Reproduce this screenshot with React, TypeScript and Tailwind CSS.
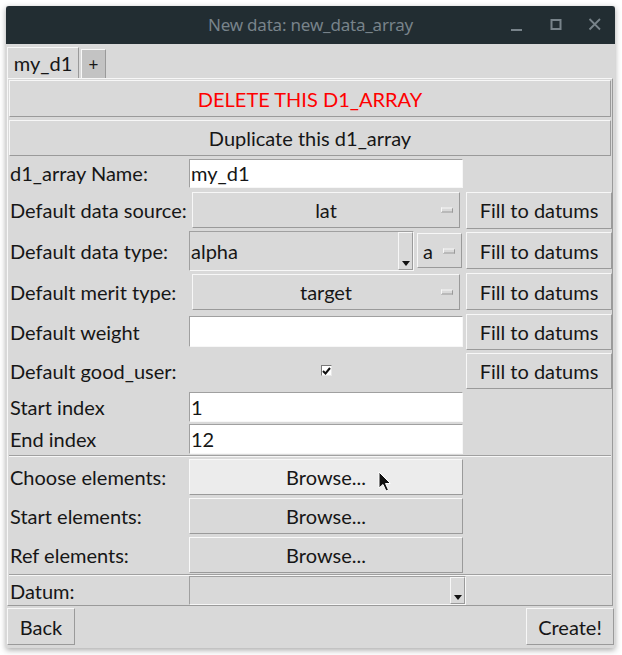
import React from "react";

const font = { fontFamily: "Lato, 'Open Sans', sans-serif" };

const raised =
  "border border-t-[#f7f7f7] border-l-[#f7f7f7] border-b-[#9a9a9a] border-r-[#9a9a9a] bg-[#d9d9d9]";
const sunken =
  "border border-t-[#a0a0a0] border-l-[#a0a0a0] border-b-[#f7f7f7] border-r-[#f7f7f7]";

function Label({ children }: { children: React.ReactNode }) {
  return (
    <div className="flex items-center pl-[1px] text-[20px] leading-none text-[#161616]">
      {children}
    </div>
  );
}

function FillButton() {
  return (
    <button
      type="button"
      className={`${raised} ml-[3px] flex h-full w-[146px] items-center justify-center text-[20px] leading-none text-[#161616]`}
    >
      Fill to datums
    </button>
  );
}

function Indicator() {
  return (
    <span className="absolute right-[6px] top-1/2 h-[5px] w-[12px] -translate-y-1/2 border border-t-[#f7f7f7] border-l-[#f7f7f7] border-b-[#9a9a9a] border-r-[#9a9a9a] bg-[#d9d9d9]" />
  );
}

function MenuButton({ value }: { value: string }) {
  return (
    <div
      className={`${raised} relative mx-[3px] flex h-full items-center justify-center text-[20px] leading-none text-[#161616]`}
    >
      {value}
      <Indicator />
    </div>
  );
}

function Arrow() {
  return (
    <div className="flex h-full w-[15px] items-end justify-center border border-t-[#f7f7f7] border-l-[#f7f7f7] border-b-[#9a9a9a] border-r-[#9a9a9a] pb-[3px]">
      <svg width="8" height="5" viewBox="0 0 8 5">
        <path d="M0 0 H8 L4 5 Z" fill="#111" />
      </svg>
    </div>
  );
}

function Entry({ value }: { value?: string }) {
  return (
    <div
      className={`${sunken} flex h-full items-center bg-white pl-[1px] text-[20px] leading-none text-[#161616]`}
    >
      {value}
    </div>
  );
}

function Row({
  h,
  label,
  mid,
  right,
}: {
  h: string;
  label: string;
  mid?: React.ReactNode;
  right?: React.ReactNode;
}) {
  return (
    <div className={`grid grid-cols-[180px_274px_150px] ${h}`}>
      <Label>{label}</Label>
      <div className="flex flex-col justify-center">{mid}</div>
      <div className="flex flex-col justify-center">{right}</div>
    </div>
  );
}

function Separator() {
  return <div className="h-[2px] border-t border-t-[#a0a0a0] border-b border-b-[#f7f7f7]" />;
}

function Browse({ active }: { active?: boolean }) {
  return (
    <div
      className={`flex h-[36px] items-center justify-center border border-t-[#f9f9f9] border-l-[#f9f9f9] border-b-[#9a9a9a] border-r-[#9a9a9a] text-[20px] leading-none text-[#161616] ${
        active ? "bg-[#ececec]" : "bg-[#d9d9d9]"
      }`}
    >
      Browse...
    </div>
  );
}

export default function App() {
  return (
    <div className="h-[655px] w-[622px] bg-white pl-[6px] pt-[6px]" style={font}>
      <div className="flex h-[642px] w-[609px] flex-col bg-[#d9d9d9] shadow-[0_2px_6px_rgba(0,0,0,0.35)]">
        {/* title bar */}
        <div className="relative flex h-[38px] items-center justify-center rounded-t-[3px] bg-[#222d32]">
          <span
            className="text-[17px] tracking-[-0.2px] text-[#78838a]"
            style={{ fontFamily: "'Noto Sans', sans-serif" }}
          >
            New data: new_data_array
          </span>
          <div className="absolute right-[12px] top-0 flex h-full items-center gap-[23px] text-[#78838a]">
            <svg width="16" height="16" viewBox="0 0 16 16">
              <path d="M2 13 H13" stroke="currentColor" strokeWidth="2" />
            </svg>
            <svg width="16" height="16" viewBox="0 0 16 16">
              <rect x="3.5" y="3" width="9" height="9" stroke="currentColor" strokeWidth="2" fill="none" />
            </svg>
            <svg width="16" height="16" viewBox="0 0 16 16">
              <path d="M2.5 2 L13 12.5 M13 2 L2.5 12.5" stroke="currentColor" strokeWidth="1.8" />
            </svg>
          </div>
        </div>

        {/* tabs */}
        <div className="flex h-[34px] items-end pl-[1px]">
          <div className="flex h-[31px] w-[72px] items-center justify-center border-l border-t border-r border-l-[#f7f7f7] border-t-[#f7f7f7] border-r-[#9a9a9a] bg-[#d9d9d9] text-[20px] leading-none text-[#161616]">
            my_d1
          </div>
          <div className="ml-[2px] flex h-[29px] w-[25px] items-center justify-center border-l border-t border-r border-l-[#f7f7f7] border-t-[#f7f7f7] border-r-[#9a9a9a] bg-[#c3c3c3] text-[17px] leading-none text-[#161616]">
            +
          </div>
        </div>

        {/* notebook pane */}
        <div className="ml-[1px] mr-[2px] flex h-[528px] flex-col border border-t-[#f7f7f7] border-l-[#f7f7f7] border-b-[#9a9a9a] border-r-[#9a9a9a] px-[1px] pt-[1px]">
          <button
            type="button"
            className={`${raised} h-[37px] text-[20px] leading-none text-[#ff0000]`}
          >
            DELETE THIS D1_ARRAY
          </button>
          <button
            type="button"
            className={`${raised} mt-[3px] h-[36px] text-[20px] leading-none text-[#161616]`}
          >
            Duplicate this d1_array
          </button>

          <Row h="h-[34px]" label="d1_array Name:" mid={<div className="h-[29px]"><Entry value="my_d1" /></div>} />
          <Row
            h="h-[40px]"
            label="Default data source:"
            mid={<div className="h-[36px]"><MenuButton value="lat" /></div>}
            right={<div className="h-[37px]"><FillButton /></div>}
          />
          <Row
            h="h-[41px]"
            label="Default data type:"
            mid={
              <div className="flex h-[40px] items-center">
                <div className={`${sunken} flex h-full w-[225px] items-center justify-between pl-[1px] text-[20px] leading-none text-[#161616]`}>
                  <span>alpha</span>
                  <Arrow />
                </div>
                <div className="relative ml-[3px] flex h-[35px] w-[45px] items-center border border-t-[#f7f7f7] border-l-[#f7f7f7] border-b-[#9a9a9a] border-r-[#9a9a9a] pl-[5px] text-[20px] leading-none text-[#161616]">
                  a
                  <Indicator />
                </div>
              </div>
            }
            right={<div className="h-[37px]"><FillButton /></div>}
          />
          <Row
            h="h-[41px]"
            label="Default merit type:"
            mid={<div className="h-[36px]"><MenuButton value="target" /></div>}
            right={<div className="h-[37px]"><FillButton /></div>}
          />
          <Row
            h="h-[39px]"
            label="Default weight"
            mid={<div className="h-[31px]"><Entry /></div>}
            right={<div className="h-[36px]"><FillButton /></div>}
          />
          <Row
            h="h-[39px]"
            label="Default good_user:"
            mid={
              <div className="flex justify-center">
                <div className="flex h-[11px] w-[11px] items-center justify-center border border-t-[#7a7a7a] border-l-[#7a7a7a] border-b-[#e8e8e8] border-r-[#e8e8e8] bg-white">
                  <svg width="9" height="8" viewBox="0 0 9 8">
                    <path d="M1 4 L3.5 6.5 L8 1" stroke="#111" strokeWidth="2" fill="none" />
                  </svg>
                </div>
              </div>
            }
            right={<div className="h-[36px]"><FillButton /></div>}
          />
          <Row h="h-[33px]" label="Start index" mid={<div className="h-[30px]"><Entry value="1" /></div>} />
          <Row h="h-[31px]" label="End index" mid={<div className="h-[30px]"><Entry value="12" /></div>} />
          <div className="mt-[1px]">
            <Separator />
          </div>
          <Row
            h="h-[39px]"
            label="Choose elements:"
            mid={
              <div className="relative">
                <Browse active />
                <svg className="absolute left-[189px] top-[12px]" width="14" height="22" viewBox="0 0 14 22">
                  <path d="M1 1 L1 17 L5 13.5 L8 20 L10.5 19 L7.5 12.5 L12.5 12.5 Z" fill="#111" stroke="#fff" strokeWidth="1" />
                </svg>
              </div>
            }
          />
          <Row h="h-[39px]" label="Start elements:" mid={<Browse />} />
          <Row h="h-[39px]" label="Ref elements:" mid={<Browse />} />
          <Separator />
          <Row
            h="h-[29px]"
            label="Datum:"
            mid={
              <div className={`${sunken} flex h-[29px] w-[277px] justify-end`}>
                <Arrow />
              </div>
            }
          />
        </div>

        {/* bottom buttons */}
        <div className="flex flex-1 items-start justify-between pl-[1px] pr-[1px] pt-[2px]">
          <button
            type="button"
            className={`${raised} h-[37px] w-[68px] text-[20px] leading-none text-[#161616]`}
          >
            Back
          </button>
          <button
            type="button"
            className={`${raised} h-[37px] w-[88px] text-[20px] leading-none text-[#161616]`}
          >
            Create!
          </button>
        </div>
      </div>
    </div>
  );
}
